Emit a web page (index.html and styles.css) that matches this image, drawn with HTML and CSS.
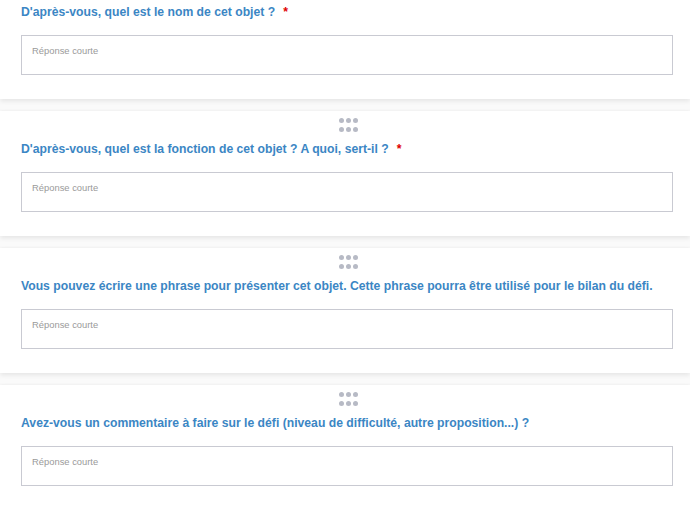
FILE: index.html
```html
<!DOCTYPE html>
<html lang="fr">
<head>
<meta charset="utf-8">
<title>Questions</title>
<link rel="stylesheet" href="styles.css">
</head>
<body>
<div class="form">
  <div class="card">
    <div class="handle"><i></i><i></i><i></i><i></i><i></i><i></i></div>
    <div class="title">D'après-vous, quel est le nom de cet objet ?<span class="req">*</span></div>
    <input class="answer" type="text" placeholder="Réponse courte">
  </div>
  <div class="card">
    <div class="handle"><i></i><i></i><i></i><i></i><i></i><i></i></div>
    <div class="title">D'après-vous, quel est la fonction de cet objet ? A quoi, sert-il ?<span class="req">*</span></div>
    <input class="answer" type="text" placeholder="Réponse courte">
  </div>
  <div class="card">
    <div class="handle"><i></i><i></i><i></i><i></i><i></i><i></i></div>
    <div class="title">Vous pouvez écrire une phrase pour présenter cet objet. Cette phrase pourra être utilisé pour le bilan du défi.</div>
    <input class="answer" type="text" placeholder="Réponse courte">
  </div>
  <div class="card">
    <div class="handle"><i></i><i></i><i></i><i></i><i></i><i></i></div>
    <div class="title">Avez-vous un commentaire à faire sur le défi (niveau de difficulté, autre proposition...) ?</div>
    <input class="answer" type="text" placeholder="Réponse courte">
  </div>
</div>
</body>
</html>
```
FILE: styles.css
```css
html, body {
  margin: 0;
  padding: 0;
  background: #fafafa;
  font-family: "Liberation Sans", Arial, sans-serif;
  overflow: hidden;
}
.form {
  margin-top: -26px;
  display: flex;
  flex-direction: column;
  gap: 12px;
}
.card {
  background: #fff;
  padding: 7px 18px 24px 21px;
  box-shadow: 0 2px 5px rgba(0, 0, 0, 0.09), 0 -1px 2px rgba(0, 0, 0, 0.025);
  display: flex;
  flex-direction: column;
}
.handle {
  align-self: center;
  display: grid;
  grid-template-columns: repeat(3, 5px);
  grid-auto-rows: 5px;
  column-gap: 2px;
  row-gap: 4px;
  margin-left: 3px;
}
.handle i {
  display: block;
  background: #b7bac5;
  border-radius: 50%;
}
.title {
  margin-top: 10px;
  font-size: 12.2px;
  line-height: 14px;
  font-weight: bold;
  color: #3b86c4;
}
.req {
  color: #e00000;
  margin-left: 8px;
}
.answer {
  box-sizing: border-box;
  margin: 16px 0 0 0;
  width: 652px;
  height: 40px;
  border: 1px solid #c9cad2;
  border-radius: 0;
  padding: 0 10px 9px 10px;
  font-family: "Liberation Sans", Arial, sans-serif;
  font-size: 9.4px;
  color: #333;
  background: #fff;
  outline: none;
}
.answer::placeholder {
  color: #9a9a9a;
  opacity: 1;
}
```
